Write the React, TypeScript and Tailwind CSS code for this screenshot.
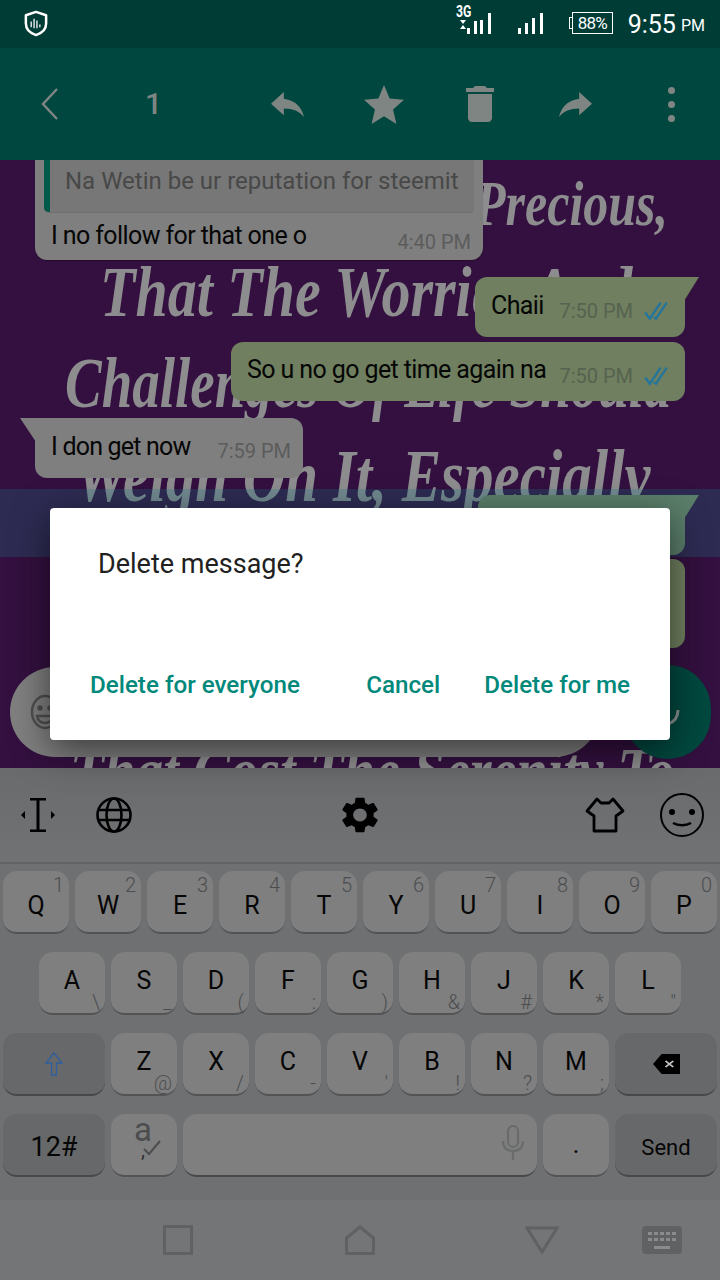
import React from 'react';

const font = 'font-["Roboto","Liberation_Sans",sans-serif]';

const row1 = [['Q', '1'], ['W', '2'], ['E', '3'], ['R', '4'], ['T', '5'], ['Y', '6'], ['U', '7'], ['I', '8'], ['O', '9'], ['P', '0']];
const row2 = [['A', '\\'], ['S', '_'], ['D', '('], ['F', ':'], ['G', ')'], ['H', '&'], ['J', '#'], ['K', '*'], ['L', '"']];
const row3 = [['Z', '@'], ['X', '/'], ['C', '-'], ['V', "'"], ['B', '!'], ['N', '?'], ['M', ';']];

function Key({ label, hint, top }: { label: string; hint: string; top?: boolean }) {
  return (
    <div className="relative h-[63px] w-[66px] shrink-0 rounded-[14px] bg-[#7f7f7f] border-b-2 border-[#525355] flex items-center justify-center">
      <span className={`text-[25px] text-[#060606] ${top ? 'mt-[8px]' : '-mt-[4px]'}`}>{label}</span>
      <span
        className={`absolute right-[5px] text-[20px] font-light leading-none text-[#4c4d4f] ${top ? 'top-[4px]' : 'bottom-[1px]'}`}
      >
        {hint}
      </span>
    </div>
  );
}

function Checks() {
  return (
    <svg viewBox="0 0 30 26" className="h-[20px] w-[30px] shrink-0" fill="none" stroke="#23759c" strokeWidth="3">
      <path d="M1 15l6 8L21 2" />
      <path d="M12 21l3 2L29 2" />
    </svg>
  );
}

function SentTail() {
  return <div className="absolute -right-[14px] top-0 h-[24px] w-[15px] bg-inherit [clip-path:polygon(0_0,100%_0,0_100%)]" />;
}

export default function App() {
  return (
    <div className={`flex h-[1280px] w-[720px] flex-col overflow-hidden bg-[#747577] ${font}`}>
      {/* status bar */}
      <div className="flex h-[48px] shrink-0 items-start bg-[#003c36] pl-[23px] pr-[15px] text-white">
        <svg viewBox="0 0 26 28" className="mt-[10px] h-[27px] w-[26px]" fill="none">
          <path d="M13 2l10.5 3.5V14c0 6-4.500 10-10.500 12C7 24 2.500 20 2.500 14V5.500z" stroke="white" strokeWidth="2.600" strokeLinejoin="round" />
          <path d="M8 12v6M11 9v10M14 11v8M17 15v3" stroke="white" strokeWidth="1.300" />
        </svg>
        <div className="relative ml-auto mt-[4px] h-[30px] w-[35px]">
          <span className="absolute left-0 top-0 origin-left scale-x-[0.72] text-[17px] font-bold leading-[15px]">3G</span>
          <svg viewBox="0 0 35 30" className="absolute inset-0 h-[30px] w-[35px]" fill="white">
            <path d="M4 16h6l-3 4zM7 21l3 4H4z" />
            <rect x="11" y="24" width="3" height="6" />
            <rect x="18" y="17" width="3" height="13" />
            <rect x="24" y="16" width="3" height="14" />
            <rect x="32" y="9" width="3" height="21" />
          </svg>
        </div>
        <svg viewBox="0 0 25 21" className="ml-[27px] mt-[13px] h-[21px] w-[25px]" fill="white">
          <rect x="0" y="15" width="3" height="6" />
          <rect x="7" y="10" width="3" height="11" />
          <rect x="14" y="5" width="3" height="16" />
          <rect x="22" y="0" width="3" height="21" />
        </svg>
        <div className="relative ml-[29px] mt-[12px] flex h-[22px] w-[41px] items-center justify-center border border-white text-[17px] leading-none tracking-[-0.8px]">
          88%
          <span className="absolute -left-[4px] top-[4px] h-[12px] w-[4px] border-y border-l border-white" />
        </div>
        <span className="ml-[15px] mt-[12px] text-[25px] leading-none">9:55</span>
        <span className="ml-[5px] mt-[18px] text-[16px] leading-none">PM</span>
      </div>

      {/* selection toolbar */}
      <div className="flex h-[112px] shrink-0 items-center bg-[#00483f] text-[#7f8583]">
        <svg viewBox="0 0 18 32" className="ml-[41px] h-[32px] w-[18px]" fill="none" stroke="currentColor" strokeWidth="2.400">
          <path d="M16 1L2 16l14 15" />
        </svg>
        <span className="ml-[86px] w-[13px] text-[30px] font-medium leading-none">1</span>
        <svg viewBox="3 5 18 15" className="ml-[113px] h-[25px] w-[33px]" preserveAspectRatio="none" fill="currentColor">
          <path d="M10 9V5l-7 7 7 7v-4.100c5 0 8.500 1.600 11 5.100-1-5-4-10-11-11z" />
        </svg>
        <svg viewBox="2 2 20 19" className="ml-[60px] h-[39px] w-[40px]" preserveAspectRatio="none" fill="currentColor">
          <path d="M12 17.270L18.180 21l-1.640-7.030L22 9.240l-7.190-.610L12 2 9.190 8.630 2 9.240l5.460 4.730L5.820 21z" />
        </svg>
        <svg viewBox="5 3 14 18" className="ml-[62px] h-[36px] w-[28px]" preserveAspectRatio="none" fill="currentColor">
          <path d="M6 19c0 1.100.9 2 2 2h8c1.100 0 2-.9 2-2V7H6v12zM19 4h-3.500l-1-1h-5l-1 1H5v2h14V4z" />
        </svg>
        <svg viewBox="3 5 18 15" className="ml-[65px] h-[25px] w-[33px]" preserveAspectRatio="none" fill="currentColor">
          <path d="M14 9V5l7 7-7 7v-4.100c-5 0-8.500 1.600-11 5.100 1-5 4-10 11-11z" />
        </svg>
        <div className="ml-[76px] flex flex-col gap-[7px]">
          <span className="h-[7px] w-[7px] rounded-full bg-current" />
          <span className="h-[7px] w-[7px] rounded-full bg-current" />
          <span className="h-[7px] w-[7px] rounded-full bg-current" />
        </div>
      </div>

      {/* chat */}
      <div className="relative flex h-[608px] shrink-0 flex-col overflow-hidden bg-[#33103f]">
        {/* wallpaper */}
        <div className='absolute inset-0 font-["Liberation_Serif",serif] font-bold italic leading-none whitespace-nowrap text-[#8d8d8f]'>
          <div className="absolute left-[475px] top-[12px] origin-top scale-y-[1.25] text-[50px]">Precious,</div>
          <div className="absolute left-[100px] top-[96px] origin-top scale-y-[1.25] text-[58px]">That The Worries And</div>
          <div className="absolute left-[65px] top-[187px] origin-top scale-y-[1.3] text-[55px]">Challenges Of Life Should</div>
          <div className="absolute left-[75px] top-[280px] origin-top scale-y-[1.25] text-[59px]">Weigh On It, Especially</div>
          <div className="absolute left-[70px] top-[578px] origin-top scale-y-[1.2] text-[56px]">That Cost The Serenity To</div>
        </div>

        <div className="relative flex flex-col">
          <div className="ml-[35px] flex h-[100px] w-[448px] flex-col rounded-b-[12px] bg-[#7f7f7f] px-[9px] shadow-[0_1px_1px_rgba(0,0,0,0.25)]">
            <div className="flex h-[53px] shrink-0 rounded-b-[5px] bg-[#777777] border-b border-[#6f6f6f] overflow-hidden">
              <div className="w-[6px] shrink-0 bg-[#005a4a]" />
              <span className="ml-[15px] mt-[5px] text-[24px] leading-[32px] text-[#484848]">Na Wetin be ur reputation for steemit</span>
            </div>
            <div className="flex">
              <span className="ml-[7px] mt-[8px] text-[25px] leading-[30px] tracking-[-0.6px] text-[#060606]">I no follow for that one o</span>
              <span className="ml-auto mt-[17px] pr-[3px] text-[20px] leading-[24px] text-[#5c5c5c]">4:40 PM</span>
            </div>
          </div>

          <div className="relative mr-[35px] mt-[17px] flex h-[60px] w-[210px] self-end rounded-[12px] rounded-tr-none bg-[#6f7f5f] pl-4 pr-[14px]">
            <SentTail />
            <span className="mt-[15px] text-[25px] leading-[28px] tracking-[-0.6px] text-[#060606]">Chaii</span>
            <span className="ml-auto mt-[22px] flex h-[24px] items-center gap-2 text-[20px] text-[#566350]">
              7:50 PM
              <Checks />
            </span>
          </div>
          <div className="mr-[35px] mt-[5px] flex h-[59px] w-[454px] self-end rounded-[12px] bg-[#6f7f5f] pl-4 pr-[14px]">
            <span className="mt-[14px] whitespace-nowrap text-[25px] leading-[28px] tracking-[-0.6px] text-[#060606]">So u no go get time again na</span>
            <span className="ml-auto mt-[22px] flex h-[24px] items-center gap-2 whitespace-nowrap text-[20px] text-[#566350]">
              7:50 PM
              <Checks />
            </span>
          </div>

          <div className="relative ml-[35px] mt-[17px] flex h-[60px] w-[268px] rounded-[12px] rounded-tl-none bg-[#7f7f7f] pl-4 pr-3">
            <div className="absolute -left-[15px] top-0 h-[24px] w-[16px] bg-inherit [clip-path:polygon(0_0,100%_0,100%_100%)]" />
            <span className="mt-[15px] text-[25px] leading-[28px] tracking-[-0.8px] text-[#060606]">I don get now</span>
            <span className="ml-auto mt-[21px] text-[20px] leading-[24px] text-[#5c5c5c]">7:59 PM</span>
          </div>

          <div className="relative mr-[35px] mt-[17px] h-[60px] w-[207px] self-end rounded-[12px] rounded-tr-none bg-[#6f7f5f]">
            <SentTail />
          </div>
          <div className="mr-[35px] mt-[4px] h-[89px] w-[300px] self-end rounded-[12px] bg-[#6f7f5f]" />

          <div className="mt-[17px] flex h-[94px] items-center pl-[10px]">
            <div className="flex h-[90px] w-[590px] items-center rounded-[45px] bg-[#7f7f7f] pl-[20px]">
              <svg viewBox="0 0 30 36" className="h-[36px] w-[30px]" fill="none" stroke="#4f4f4f" strokeWidth="2.500">
                <ellipse cx="15" cy="18" rx="13" ry="16" />
                <circle cx="10" cy="14" r="1.500" fill="#4f4f4f" />
                <circle cx="20" cy="14" r="1.500" fill="#4f4f4f" />
                <path d="M7 22h16c-1 5-4 7-8 7s-7-2-8-7z" />
              </svg>
            </div>
            <div className="ml-[24px] flex h-[94px] w-[87px] items-center justify-center rounded-full bg-[#00483f]">
              <svg viewBox="0 0 40 40" className="h-[40px] w-[40px]" fill="none" stroke="#8a8f8d" strokeWidth="3">
                <path d="M30 18c0 8-4 12-10 14" />
              </svg>
            </div>
          </div>
        </div>

        {/* selected row highlight */}
        <div className="pointer-events-none absolute inset-x-0 top-[329px] h-[68px] bg-[#1a7a8a]/25" />
      </div>

      {/* keyboard */}
      <div className="flex h-[432px] shrink-0 flex-col bg-[#6e7072]">
        <div className="flex h-[96px] shrink-0 items-center border-b-2 border-[#626466] bg-gradient-to-b from-[#696b6d] to-[#707274] text-black">
          <svg viewBox="0 0 34 36" className="ml-[21px] h-[36px] w-[34px]" fill="black">
            <path d="M9 1h16v2.500h-6.500v29H25V35H9v-2.500h6.500v-29H9z" />
            <path d="M0 18l4-4v8zM34 18l-4-4v8z" />
          </svg>
          <svg viewBox="0 0 36 36" className="ml-[41px] h-[36px] w-[36px]" fill="none" stroke="black" strokeWidth="2.600">
            <circle cx="18" cy="18" r="16.500" />
            <ellipse cx="18" cy="18" rx="7.500" ry="16.500" />
            <path d="M2 13h32M2 23h32" />
          </svg>
          <svg viewBox="2.500 2 19 20" className="ml-[210px] h-[36px] w-[36px]" preserveAspectRatio="none" fill="black">
            <path d="M19.140 12.940c.04-.3.06-.61.06-.94 0-.32-.02-.64-.07-.94l2.030-1.580c.18-.14.23-.41.12-.61l-1.920-3.320c-.12-.22-.37-.29-.59-.22l-2.390.96c-.5-.38-1.030-.7-1.620-.94l-.36-2.540c-.04-.24-.24-.41-.48-.41h-3.840c-.24 0-.43.17-.47.41l-.36 2.540c-.59.24-1.130.57-1.620.94l-2.390-.96c-.22-.08-.47 0-.59.22L2.740 8.870c-.12.21-.08.47.12.61l2.030 1.580c-.05.3-.09.63-.09.94s.02.64.07.94l-2.030 1.580c-.18.14-.23.41-.12.61l1.920 3.320c.12.22.37.29.59.22l2.390-.96c.5.38 1.030.7 1.620.94l.36 2.540c.05.24.24.41.48.41h3.840c.24 0 .44-.17.47-.41l.36-2.540c.59-.24 1.130-.56 1.620-.94l2.390.96c.22.08.47 0 .59-.22l1.920-3.320c.12-.22.07-.47-.12-.61l-2.010-1.580zM12 15.600c-1.980 0-3.600-1.620-3.600-3.600s1.620-3.600 3.600-3.600 3.600 1.620 3.600 3.600-1.620 3.600-3.600 3.600z" />
          </svg>
          <svg viewBox="0 0 40 36" className="ml-[207px] h-[36px] w-[40px]" fill="none" stroke="black" strokeWidth="2.800" strokeLinejoin="round">
            <path d="M12 2l4 4h8l4-4 10 12-7 5v15H9V19l-7-5z" />
          </svg>
          <svg viewBox="0 0 44 44" className="ml-[35px] h-[44px] w-[44px]" fill="none" stroke="black" strokeWidth="2">
            <circle cx="22" cy="22" r="21" />
            <circle cx="12" cy="19" r="3" fill="black" stroke="none" />
            <circle cx="32" cy="19" r="3" fill="black" stroke="none" />
            <path d="M13 30c5 3 13 3 18 0" strokeWidth="2.500" />
          </svg>
        </div>

        <div className="flex flex-col gap-[18px] pt-[7px]">
          <div className="flex gap-[6px] pl-[3px]">
            {row1.map(([l, h]) => (
              <Key key={l} label={l} hint={h} top />
            ))}
          </div>
          <div className="flex gap-[6px] pl-[39px]">
            {row2.map(([l, h]) => (
              <Key key={l} label={l} hint={h} />
            ))}
          </div>
          <div className="flex gap-[6px] pl-[3px]">
            <div className="flex h-[63px] w-[102px] items-center justify-center rounded-[14px] border-b-2 border-[#47484a] bg-[#676869]">
              <svg viewBox="0 0 18 24" className="h-[24px] w-[18px]" fill="none" stroke="#2f5f9f" strokeWidth="1.300">
                <path d="M9 1L1 11h5.500v12h5V11H17z" />
              </svg>
            </div>
            {row3.map(([l, h]) => (
              <Key key={l} label={l} hint={h} />
            ))}
            <div className="flex h-[63px] w-[102px] items-center justify-center rounded-[14px] border-b-2 border-[#47484a] bg-[#676869]">
              <svg viewBox="0 0 28 26" className="h-[20px] w-[27px]" preserveAspectRatio="none">
                <path d="M9 0h19v26H9L0 13z" fill="black" />
                <path d="M13 9l8 8M21 9l-8 8" stroke="#c8c8c8" strokeWidth="2" />
              </svg>
            </div>
          </div>
          <div className="flex gap-[6px] pl-[3px]">
            <div className="flex h-[63px] w-[102px] items-center justify-center rounded-[14px] border-b-2 border-[#47484a] bg-[#676869] pt-[5px] text-[27px] text-[#060606]">
              12#
            </div>
            <div className="relative h-[63px] w-[66px] rounded-[14px] border-b-2 border-[#525355] bg-[#7f7f7f]">
              <span className="absolute left-[23px] -top-[3px] text-[33px] leading-[38px] text-[#4c4d4f]">a</span>
              <span className="absolute left-[30px] top-[26px] text-[20px] leading-[20px] text-[#303132]">,</span>
              <svg viewBox="0 0 18 16" className="absolute left-[32px] top-[26px] h-[16px] w-[18px]" fill="none" stroke="#4c4d4f" strokeWidth="2">
                <path d="M1 9l5 5L17 1" />
              </svg>
            </div>
            <div className="flex h-[63px] w-[354px] items-center justify-end rounded-[14px] border-b-2 border-[#47484a] bg-[#7f7f7f] pr-[13px]">
              <svg viewBox="0 0 22 36" className="-mt-[4px] h-[36px] w-[22px]" fill="none" stroke="#6a6b6c" strokeWidth="2.200">
                <rect x="6" y="1" width="10" height="21" rx="5" />
                <path d="M1 16c0 7 4 10 10 10s10-3 10-10M11 26v9" />
              </svg>
            </div>
            <div className="flex h-[63px] w-[66px] items-center justify-center rounded-[14px] border-b-2 border-[#525355] bg-[#7f7f7f] text-[25px] text-[#060606]">
              .
            </div>
            <div className="flex h-[63px] w-[102px] items-center justify-center rounded-[14px] border-b-2 border-[#47484a] bg-[#676869] pt-[5px] text-[22px] text-[#060606]">
              Send
            </div>
          </div>
        </div>
      </div>

      {/* nav bar */}
      <div className="flex h-[80px] shrink-0 items-center bg-[#747577] text-[#5f6163]">
        <svg viewBox="0 0 30 30" className="ml-[163px] h-[30px] w-[30px]" fill="none" stroke="currentColor" strokeWidth="3">
          <rect x="1.500" y="1.500" width="27" height="27" />
        </svg>
        <svg viewBox="0 0 30 30" className="ml-[152px] h-[30px] w-[30px]" fill="none" stroke="currentColor" strokeWidth="3">
          <path d="M15 2L1.500 13v15.500h27V13z" />
        </svg>
        <svg viewBox="0 0 34 28" className="ml-[150px] h-[28px] w-[34px]" fill="none" stroke="currentColor" strokeWidth="3">
          <path d="M2 2h30L17 26z" />
        </svg>
        <svg viewBox="0 0 40 28" className="ml-[83px] h-[28px] w-[40px]" fill="currentColor">
          <path d="M4 0h32a4 4 0 0 1 4 4v20a4 4 0 0 1-4 4H4a4 4 0 0 1-4-4V4a4 4 0 0 1 4-4z" />
          <path
            d="M6 6h4v3H6zM12 6h4v3h-4zM18 6h4v3h-4zM24 6h4v3h-4zM30 6h4v3h-4zM6 12h4v3H6zM12 12h4v3h-4zM18 12h4v3h-4zM24 12h4v3h-4zM30 12h4v3h-4zM12 20h16v3H12z"
            fill="#8a8b8c"
          />
        </svg>
      </div>

      {/* dialog */}
      <div className="absolute left-[50px] top-[508px] flex h-[232px] w-[620px] flex-col rounded-[4px] bg-white shadow-[0_10px_36px_rgba(0,0,0,0.55)]">
        <div className="ml-[48px] mt-[38px] text-[27px] leading-[36px] text-[#212121]">Delete message?</div>
        <div className="mt-auto mb-[38px] flex text-[24.2px] font-medium leading-[34px] text-[#00897b]">
          <span className="ml-[40px]">Delete for everyone</span>
          <span className="ml-auto">Cancel</span>
          <span className="ml-[44px] mr-[40px]">Delete for me</span>
        </div>
      </div>
    </div>
  );
}
